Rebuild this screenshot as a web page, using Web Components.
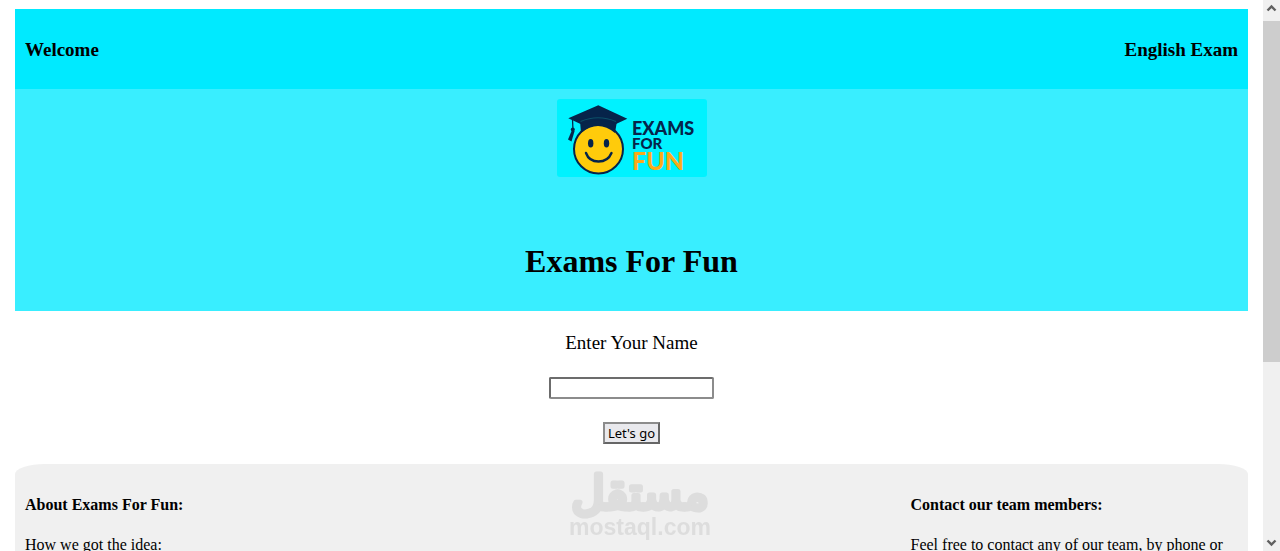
<!DOCTYPE html>
<html lang="en">
<head>
<meta charset="UTF-8">
<meta name="viewport" content="width=device-width, initial-scale=1.0">
<title>Exams For Fun</title>
<style>
    body {
        margin: 0;
        background: white;
        color: black;
        font-family: "Liberation Serif", "Times New Roman", serif;
        font-size: 16px;
        line-height: 18px;
    }
    h1, h3, h4, p {
        margin: 0;
    }
    h1 {
        font-size: 32px;
        line-height: 36px;
    }
    h3 {
        font-size: 19px;
        line-height: 22px;
    }
    h4 {
        font-size: 16px;
    }
</style>
</head>
<body>
<page-shell>
    <top-bar>
        <h3>Welcome</h3>
        <h3>English Exam</h3>
    </top-bar>
    <hero-banner>
        <exam-logo></exam-logo>
        <h1>Exams For Fun</h1>
    </hero-banner>
    <name-form></name-form>
    <page-footer>
        <footer-column>
            <h4>About Exams For Fun:</h4>
            <p>How we got the idea:</p>
        </footer-column>
        <footer-column>
            <h4>Contact our team members:</h4>
            <p>Feel free to contact any of our team, by phone or</p>
        </footer-column>
    </page-footer>
</page-shell>
<site-watermark></site-watermark>

<script>
class PageShell extends HTMLElement {
    connectedCallback() {
        this.attachShadow({ mode: 'open' });
        this.shadowRoot.innerHTML = `
            <style>
                :host {
                    display: flex;
                    height: 100vh;
                    overflow: hidden;
                }
                main {
                    flex: 1;
                    min-width: 0;
                    display: flex;
                    flex-direction: column;
                    padding: 9px 15px 0;
                }
            </style>
            <main><slot></slot></main>
            <scroll-rail></scroll-rail>
        `;
    }
}
customElements.define('page-shell', PageShell);

class ScrollRail extends HTMLElement {
    connectedCallback() {
        this.attachShadow({ mode: 'open' });
        this.shadowRoot.innerHTML = `
            <style>
                :host {
                    display: flex;
                    flex-direction: column;
                    width: 17px;
                    background: #f0f0f0;
                }
                svg {
                    display: block;
                    flex: none;
                    width: 17px;
                    height: 21px;
                    fill: none;
                    stroke: #606060;
                    stroke-width: 2.4;
                }
                .track {
                    flex: 1;
                }
                .thumb {
                    height: 67%;
                    background: #cdcdcd;
                }
            </style>
            <svg viewBox="0 0 17 21" aria-hidden="true"><path d="M4.5 10.5 L8.5 6.5 L12.5 10.5"/></svg>
            <div class="track"><div class="thumb"></div></div>
            <svg viewBox="0 0 17 21" aria-hidden="true"><path d="M4.5 10.5 L8.5 14.5 L12.5 10.5"/></svg>
        `;
    }
}
customElements.define('scroll-rail', ScrollRail);

class TopBar extends HTMLElement {
    connectedCallback() {
        this.attachShadow({ mode: 'open' });
        this.shadowRoot.innerHTML = `
            <style>
                :host {
                    display: block;
                    flex: none;
                }
                header {
                    display: flex;
                    justify-content: space-between;
                    align-items: center;
                    padding: 30px 10px 28px;
                    background: #00eaff;
                }
            </style>
            <header><slot></slot></header>
        `;
    }
}
customElements.define('top-bar', TopBar);

class HeroBanner extends HTMLElement {
    connectedCallback() {
        this.attachShadow({ mode: 'open' });
        this.shadowRoot.innerHTML = `
            <style>
                :host {
                    display: flex;
                    flex: none;
                    flex-direction: column;
                    align-items: center;
                    gap: 66px;
                    padding: 10px 10px 32px;
                    background: #39eeff;
                }
            </style>
            <slot></slot>
        `;
    }
}
customElements.define('hero-banner', HeroBanner);

class ExamLogo extends HTMLElement {
    connectedCallback() {
        this.attachShadow({ mode: 'open' });
        this.shadowRoot.innerHTML = `
            <style>
                :host {
                    display: block;
                }
                svg {
                    display: block;
                    width: 150px;
                    height: 78px;
                    border-radius: 3px;
                    background: #00f2ff;
                }
                text {
                    font-family: Lato, sans-serif;
                    font-weight: 900;
                    fill: #06244a;
                }
                .exams { font-size: 18px; }
                .for { font-size: 15px; }
                .fun { font-size: 25px; fill: #fbaa19; }
            </style>
            <svg viewBox="0 0 150 78" role="img" aria-label="Exams For Fun logo">
                <circle cx="41.5" cy="50" r="24.5" fill="#ffcb0b" stroke="#06244a" stroke-width="2"/>
                <path d="M23 22 L24 34 Q41 20 58 34 L60 22 L41 15 Z" fill="#06244a"/>
                <path d="M41.3 6.3 L11.3 19.2 L23.5 25 Q41 18 59 25 L70.3 19.7 Z" fill="#06244a"/>
                <path d="M23.5 22.5 Q41 15 59 22.5" fill="none" stroke="#0c5068" stroke-width="1.2"/>
                <path d="M15.5 20 L16 32" stroke="#06244a" stroke-width="1.3"/>
                <circle cx="15.8" cy="30.5" r="2" fill="#06244a"/>
                <path d="M15 31 L17.6 32 L14.5 42.5 L11 40.5 Z" fill="#06244a"/>
                <ellipse cx="33.7" cy="44.3" rx="2.7" ry="4.3" fill="#06244a"/>
                <ellipse cx="49.5" cy="44.3" rx="2.7" ry="4.3" fill="#06244a"/>
                <path d="M29 54 Q32 62.5 41.5 62.5 Q51 62.5 54.5 54" fill="none" stroke="#06244a" stroke-width="2.4" stroke-linecap="round"/>
                <text class="exams" x="75" y="36">EXAMS</text>
                <text class="for" x="75" y="50">FOR</text>
                <text class="fun" x="75" y="71">FUN</text>
            </svg>
        `;
    }
}
customElements.define('exam-logo', ExamLogo);

class NameForm extends HTMLElement {
    connectedCallback() {
        this.attachShadow({ mode: 'open' });
        this.shadowRoot.innerHTML = `
            <style>
                :host {
                    display: block;
                    flex: none;
                }
                form {
                    display: flex;
                    flex-direction: column;
                    align-items: center;
                    gap: 23px;
                    padding: 21px 10px 20px;
                }
                label {
                    font-size: 19px;
                    line-height: 22px;
                }
                input, button {
                    box-sizing: border-box;
                    height: 22px;
                    margin: 0;
                    border: 2px solid;
                    font: 13px "Noto Sans", sans-serif;
                }
                input {
                    width: 165px;
                    padding: 1px 2px;
                    border-color: #6c6c6c #8c8c8c #8c8c8c #6c6c6c;
                    border-radius: 2px;
                    background: white;
                }
                button {
                    padding: 0 3px;
                    border-color: #8c8c8c #666666 #666666 #8c8c8c;
                    background: #e9e9ed;
                    color: black;
                    line-height: 18px;
                }
            </style>
            <form onsubmit="return false">
                <label for="name">Enter Your Name</label>
                <input type="text" id="name" name="name">
                <button type="submit">Let's go</button>
            </form>
        `;
    }
}
customElements.define('name-form', NameForm);

class PageFooter extends HTMLElement {
    connectedCallback() {
        this.attachShadow({ mode: 'open' });
        this.shadowRoot.innerHTML = `
            <style>
                :host {
                    display: block;
                    flex: 1 0 auto;
                    background: #f0f0f0;
                    border-radius: 30px 30px 0 0 / 10px 10px 0 0;
                }
                footer {
                    display: flex;
                    justify-content: space-between;
                    padding: 32px 10px 0;
                }
            </style>
            <footer><slot></slot></footer>
        `;
    }
}
customElements.define('page-footer', PageFooter);

class FooterColumn extends HTMLElement {
    connectedCallback() {
        this.attachShadow({ mode: 'open' });
        this.shadowRoot.innerHTML = `
            <style>
                :host {
                    display: flex;
                    flex-direction: column;
                    gap: 22px;
                    width: 27%;
                }
            </style>
            <slot></slot>
        `;
    }
}
customElements.define('footer-column', FooterColumn);

class SiteWatermark extends HTMLElement {
    connectedCallback() {
        this.attachShadow({ mode: 'open' });
        this.shadowRoot.innerHTML = `
            <style>
                :host {
                    position: fixed;
                    right: 0;
                    bottom: 6px;
                    left: 0;
                    display: flex;
                    justify-content: center;
                    pointer-events: none;
                }
                svg {
                    display: block;
                    width: 160px;
                    height: 90px;
                }
                text {
                    fill: #dddddd;
                    text-anchor: middle;
                }
                .arabic {
                    font: 46px "DejaVu Sans", sans-serif;
                    stroke: #dddddd;
                    stroke-width: 5;
                    stroke-linejoin: round;
                }
                .latin {
                    font: bold 23px "Liberation Sans", Arial, sans-serif;
                }
            </style>
            <svg viewBox="0 0 160 90">
                <text class="arabic" x="80" y="54" lang="ar">مستقل</text>
                <text class="latin" x="80" y="80">mostaql.com</text>
            </svg>
        `;
    }
}
customElements.define('site-watermark', SiteWatermark);
</script>
</body>
</html>
